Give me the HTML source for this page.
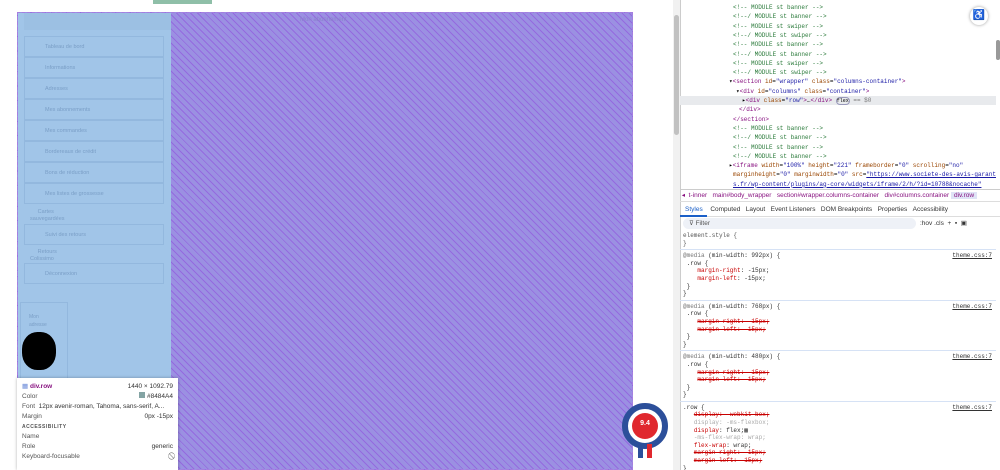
<!DOCTYPE html>
<html><head><meta charset="utf-8"><style>
*{margin:0;padding:0;box-sizing:border-box}
html,body{width:1000px;height:470px;overflow:hidden}
body{background:#fff;font-family:"Liberation Sans",sans-serif;position:relative}
.abs{position:absolute}
.mono{font-family:"Liberation Mono",monospace;font-size:6px;white-space:nowrap}
.menu div{position:absolute;left:7px;width:140px;height:21px;border:1px solid #93b8de;font-size:5.5px;color:#7a9ec6;padding:7px 0 0 20px}
.dl{position:absolute;left:0;width:312px;height:9.3px;line-height:9.3px}
.c{color:#2a7a3a}.t{color:#881280}.a{color:#994500}.v{color:#1a1aa6}
.sty div{line-height:7.6px}
.r{color:#c80000}.s{text-decoration:line-through;color:#c80000}
.blk{border-bottom:1px solid #d6e2f5;padding:2px 4px 2px 3px}
</style></head><body>
<div class="abs" style="left:153px;top:0;width:59px;height:4px;background:#8fbfa8"></div>
<div class="abs" style="left:17px;top:12px;width:616px;height:458px;border:1px dashed #a67de0;background:#9b90e2;background-image:repeating-linear-gradient(45deg,transparent 0 4px,rgba(140,60,220,.45) 4px 5px)"></div>
<div class="abs" style="left:18px;top:13px;width:153px;height:457px;background:#a1c5e8"></div>
<div class="abs" style="left:24px;top:13px;width:147px;height:17px;background:#9cc0e3"></div>
<div class="abs" style="left:300px;top:17px;font-size:6px;color:#8a80cc">Mon abonnement</div>
<div class="abs menu" style="left:17px;top:0">
<div style="top:36px">Tableau de bord</div>
<div style="top:57px">Informations</div>
<div style="top:78px">Adresses</div>
<div style="top:99px">Mes abonnements</div>
<div style="top:120px">Mes commandes</div>
<div style="top:141px">Bordereaux de crédit</div>
<div style="top:162px">Bons de réduction</div>
<div style="top:183px">Mes listes de grossesse</div>
<div style="top:224px">Suivi des retours</div>
<div style="top:263px">Déconnexion</div>
</div>
<div class="abs" style="left:30px;top:209px;font-size:5.5px;color:#7a9ec6;line-height:7px">&nbsp;&nbsp;&nbsp;&nbsp;&nbsp;Cartes<br>sauvegardées</div>
<div class="abs" style="left:30px;top:249px;font-size:5.5px;color:#7a9ec6;line-height:7px">&nbsp;&nbsp;&nbsp;&nbsp;&nbsp;Retours<br>Colissimo</div>
<div class="abs" style="left:20px;top:302px;width:48px;height:90px;border:1px solid #93b8de;font-size:5px;color:#7a9ec6;padding:10px 8px;line-height:8px">Mon<br>adresse</div>
<div class="abs" style="left:22px;top:332px;width:34px;height:38px;background:#000;border-radius:45%"></div>
<div class="abs" style="left:17px;top:378px;width:161px;height:92px;background:#fff;box-shadow:0 0 3px rgba(0,0,0,.3);font-size:6.5px;color:#555;padding:4px 5px;line-height:10px">
<div><span style="color:#6a8ad8">▦</span> <b style="color:#881280">div.row</b><span style="float:right;color:#333">1440 × 1092.79</span></div>
<div>Color<span style="float:right;color:#333"><span style="display:inline-block;width:6px;height:6px;background:#84a4a4"></span> #8484A4</span></div>
<div>Font&nbsp; <span style="color:#333">12px avenir-roman, Tahoma, sans-serif, A...</span></div>
<div>Margin<span style="float:right;color:#333">0px -15px</span></div>
<div style="font-size:5px;font-weight:bold;letter-spacing:.5px">ACCESSIBILITY</div>
<div>Name</div>
<div>Role<span style="float:right;color:#333">generic</span></div>
<div>Keyboard-focusable<span style="float:right">⃠</span></div>
</div>
<div class="abs" style="left:622px;top:403px;width:46px;height:46px;border-radius:50%;border:6px solid #2c4f9a;background:#fff"></div>
<div class="abs" style="left:632px;top:413px;width:26px;height:26px;border-radius:50%;background:#e0282e;color:#fff;font-size:7px;font-weight:bold;text-align:center;padding-top:7px">9.4</div>
<div class="abs" style="left:638px;top:444px;width:5px;height:14px;background:#2c4f9a"></div>
<div class="abs" style="left:647px;top:444px;width:5px;height:14px;background:#e0282e"></div>
<div class="abs" style="left:673px;top:0;width:7px;height:470px;background:#f1f1f1"></div>
<div class="abs" style="left:674px;top:15px;width:5px;height:120px;background:#c1c1c1;border-radius:3px"></div>
<div class="abs" style="left:680px;top:0;width:320px;height:470px;background:#fff;border-left:1px solid #ccc"></div>
<div class="abs" style="left:970px;top:7px;width:18px;height:18px;border-radius:50%;background:#fff;box-shadow:0 0 3px rgba(0,0,0,.4);font-size:10px;text-align:center;line-height:18px">♿</div>
<div class="abs" style="left:996px;top:40px;width:4px;height:20px;background:#999;border-radius:2px"></div>
<div class="abs mono" style="left:680px;top:0;width:316px;height:190px;overflow:hidden">
<div class="dl c" style="top:3px;left:53px">&lt;!-- MODULE st banner --&gt;</div>
<div class="dl c" style="top:12.3px;left:53px">&lt;!--/ MODULE st banner --&gt;</div>
<div class="dl c" style="top:21.6px;left:53px">&lt;!-- MODULE st swiper --&gt;</div>
<div class="dl c" style="top:30.9px;left:53px">&lt;!--/ MODULE st swiper --&gt;</div>
<div class="dl c" style="top:40.2px;left:53px">&lt;!-- MODULE st banner --&gt;</div>
<div class="dl c" style="top:49.5px;left:53px">&lt;!--/ MODULE st banner --&gt;</div>
<div class="dl c" style="top:58.8px;left:53px">&lt;!-- MODULE st swiper --&gt;</div>
<div class="dl c" style="top:68.1px;left:53px">&lt;!--/ MODULE st swiper --&gt;</div>
<div class="dl" style="top:77.4px;left:49px">▾<span class="t">&lt;section</span> <span class="a">id</span>=<span class="v">"wrapper"</span> <span class="a">class</span>=<span class="v">"columns-container"</span><span class="t">&gt;</span></div>
<div class="dl" style="top:86.7px;left:56px">▾<span class="t">&lt;div</span> <span class="a">id</span>=<span class="v">"columns"</span> <span class="a">class</span>=<span class="v">"container"</span><span class="t">&gt;</span></div>
<div class="dl" style="top:96px;left:0;width:316px;background:#e8eaed;padding-left:62px">▸<span class="t">&lt;div</span> <span class="a">class</span>=<span class="v">"row"</span><span class="t">&gt;</span>…<span class="t">&lt;/div&gt;</span> <span style="border:1px solid #99b;border-radius:4px;font-size:5px">flex</span> <span style="color:#777">== $0</span></div>
<div class="dl t" style="top:105.3px;left:59px">&lt;/div&gt;</div>
<div class="dl t" style="top:114.6px;left:53px">&lt;/section&gt;</div>
<div class="dl c" style="top:123.9px;left:53px">&lt;!-- MODULE st banner --&gt;</div>
<div class="dl c" style="top:133.2px;left:53px">&lt;!--/ MODULE st banner --&gt;</div>
<div class="dl c" style="top:142.5px;left:53px">&lt;!-- MODULE st banner --&gt;</div>
<div class="dl c" style="top:151.8px;left:53px">&lt;!--/ MODULE st banner --&gt;</div>
<div class="dl" style="top:161.1px;left:49px">▸<span class="t">&lt;iframe</span> <span class="a">width</span>=<span class="v">"100%"</span> <span class="a">height</span>=<span class="v">"221"</span> <span class="a">frameborder</span>=<span class="v">"0"</span> <span class="a">scrolling</span>=<span class="v">"no"</span></div>
<div class="dl" style="top:170.4px;left:53px"><span class="a">marginheight</span>=<span class="v">"0"</span> <span class="a">marginwidth</span>=<span class="v">"0"</span> <span class="a">src</span>=<span style="color:#1a1aa6;text-decoration:underline">"https://www.societe-des-avis-garanti</span></div>
<div class="dl" style="top:179.7px;left:53px;color:#1a1aa6;text-decoration:underline">s.fr/wp-content/plugins/ag-core/widgets/iframe/2/h/?id=10788&amp;nocache"</div>
</div>
<div class="abs" style="left:680px;top:189px;width:320px;height:13px;border-top:1px solid #ccc;border-bottom:1px solid #ddd;font-size:6.5px;line-height:12px;color:#881280;white-space:nowrap;overflow:hidden">&nbsp;◂ &nbsp;t-inner &nbsp;&nbsp;main#body_wrapper &nbsp;&nbsp;section#wrapper.columns-container &nbsp;&nbsp;div#columns.container <span style="background:#dfe3f6;padding:0 3px">div.row</span></div>
<div class="abs" style="left:680px;top:203px;width:320px;height:14px;border-bottom:1px solid #ddd;font-size:6.5px;line-height:14px;color:#333;white-space:nowrap">
<span style="color:#1a5fc8;border-bottom:2px solid #1a5fc8;padding:0 4px 2px 5px">Styles</span>&nbsp; Computed &nbsp;&nbsp;Layout &nbsp;&nbsp;Event Listeners &nbsp;&nbsp;DOM Breakpoints &nbsp;&nbsp;Properties &nbsp;&nbsp;Accessibility</div>
<div class="abs" style="left:683px;top:218px;width:233px;height:11px;border-radius:6px;background:#eef1f7;font-size:6.5px;line-height:11px;padding-left:6px;color:#555">⊽ Filter</div>
<div class="abs" style="left:920px;top:218px;font-size:6.5px;line-height:11px;color:#333">:hov .cls &nbsp;+ &nbsp;▪ &nbsp;▣</div>
<div class="abs mono sty" style="left:680px;top:230px;width:316px;height:240px;overflow:hidden;font-size:6px;color:#333">
<div class="blk" style="color:#555">element.style {<br>}</div><div class="blk"><span style="color:#777">@media</span> (min-width: 992px) {<span style="float:right;text-decoration:underline">theme.css:7</span><br>&nbsp;.row {<br>&nbsp;&nbsp;&nbsp;&nbsp;<span class="r">margin-right</span>: -15px;<br>&nbsp;&nbsp;&nbsp;&nbsp;<span class="r">margin-left</span>: -15px;<br>&nbsp;}<br>}</div><div class="blk"><span style="color:#777">@media</span> (min-width: 768px) {<span style="float:right;text-decoration:underline">theme.css:7</span><br>&nbsp;.row {<br>&nbsp;&nbsp;&nbsp;&nbsp;<span class="s">margin-right: -15px;</span><br>&nbsp;&nbsp;&nbsp;&nbsp;<span class="s">margin-left: -15px;</span><br>&nbsp;}<br>}</div><div class="blk"><span style="color:#777">@media</span> (min-width: 480px) {<span style="float:right;text-decoration:underline">theme.css:7</span><br>&nbsp;.row {<br>&nbsp;&nbsp;&nbsp;&nbsp;<span class="s">margin-right: -15px;</span><br>&nbsp;&nbsp;&nbsp;&nbsp;<span class="s">margin-left: -15px;</span><br>&nbsp;}<br>}</div><div class="blk">.row {<span style="float:right;text-decoration:underline">theme.css:7</span><br>&nbsp;&nbsp;&nbsp;<span class="s">display: -webkit-box;</span><br>&nbsp;&nbsp;&nbsp;<span style="color:#aaa">display: -ms-flexbox;</span><br>&nbsp;&nbsp;&nbsp;<span class="r">display</span>: flex;▦<br>&nbsp;&nbsp;&nbsp;<span style="color:#aaa">-ms-flex-wrap: wrap;</span><br>&nbsp;&nbsp;&nbsp;<span class="r">flex-wrap</span>: wrap;<br>&nbsp;&nbsp;&nbsp;<span class="s">margin-right: -15px;</span><br>&nbsp;&nbsp;&nbsp;<span class="s">margin-left: -15px;</span><br>}</div>
</div>
</body></html>
